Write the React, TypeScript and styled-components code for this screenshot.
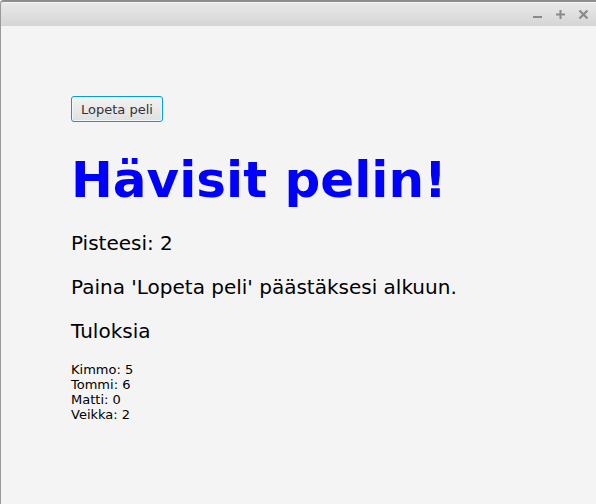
import React from "react";
import styled, { createGlobalStyle } from "styled-components";

const Global = createGlobalStyle`
  html, body { margin: 0; padding: 0; background: #f4f4f4; }
  body { font-family: "DejaVu Sans", sans-serif; }
`;

const Window = styled.div`
  width: 596px;
  height: 504px;
  box-sizing: border-box;
  display: flex;
  flex-direction: column;
  border-top: 2px solid #8e8e8e;
  border-left: 1px solid #9a9a9a;
  border-top-left-radius: 4px;
  background: #f4f4f4;
  overflow: hidden;
`;

const TitleBar = styled.div`
  height: 24px;
  flex: none;
  display: flex;
  justify-content: flex-end;
  align-items: center;
  gap: 12px;
  padding-right: 7px;
  background: linear-gradient(#e9e9e9, #d5d5d5);
  border-top: 1px solid #f6f6f6;
  box-sizing: border-box;
`;

const Ctrl = styled.svg`
  width: 11px;
  height: 11px;
  display: block;
`;

const Content = styled.div`
  flex: 1;
  display: flex;
  flex-direction: column;
  align-items: flex-start;
  padding: 70px 0 0 70px;
`;

const Button = styled.button`
  height: 26px;
  padding: 0 9px;
  box-sizing: border-box;
  font-family: "DejaVu Sans", sans-serif;
  font-size: 13px;
  color: #333333;
  border: 1px solid #039ed3;
  border-radius: 3px;
  box-shadow: inset 0 0 0 1px #eef8fc;
  background: linear-gradient(#f3f3f3, #e0e0e0);
  cursor: pointer;
`;

const Title = styled.h1`
  margin: 29px 0 0 0;
  font-family: "DejaVu Sans", sans-serif;
  font-weight: bold;
  font-size: 50px;
  line-height: 1.164;
  color: #0000ff;
`;

const Text = styled.p<{ $gap: number }>`
  margin: ${(p) => p.$gap}px 0 0 0;
  font-family: "DejaVu Sans", sans-serif;
  font-size: 20px;
  line-height: 1.164;
  color: #000;
`;

const List = styled.div`
  margin: 19px 0 0 0;
  display: flex;
  flex-direction: column;
`;

const ListRow = styled.div`
  font-family: "DejaVu Sans", sans-serif;
  font-size: 13px;
  line-height: 15px;
  color: #000;
`;

const results = [
  ["Kimmo", 5],
  ["Tommi", 6],
  ["Matti", 0],
  ["Veikka", 2],
] as const;

export default function App() {
  return (
    <>
      <Global />
      <Window>
        <TitleBar>
          <Ctrl viewBox="0 0 11 11">
            <rect x="1" y="7" width="9" height="2" fill="#8a8a8a" />
          </Ctrl>
          <Ctrl viewBox="0 0 11 11">
            <rect x="1" y="4.5" width="9" height="2" fill="#8a8a8a" />
            <rect x="4.5" y="1" width="2" height="9" fill="#8a8a8a" />
          </Ctrl>
          <Ctrl viewBox="0 0 11 11">
            <path d="M1.5 1.5 L9.5 9.5 M9.5 1.5 L1.5 9.5" stroke="#8a8a8a" strokeWidth="2.2" />
          </Ctrl>
        </TitleBar>
        <Content>
          <Button>Lopeta peli</Button>
          <Title>Hävisit pelin!</Title>
          <Text $gap={23}>Pisteesi: 2</Text>
          <Text $gap={20.5}>Paina 'Lopeta peli' päästäksesi alkuun.</Text>
          <Text $gap={20.5}>Tuloksia</Text>
          <List>
            {results.map(([name, score]) => (
              <ListRow key={name}>
                {name}: {score}
              </ListRow>
            ))}
          </List>
        </Content>
      </Window>
    </>
  );
}
